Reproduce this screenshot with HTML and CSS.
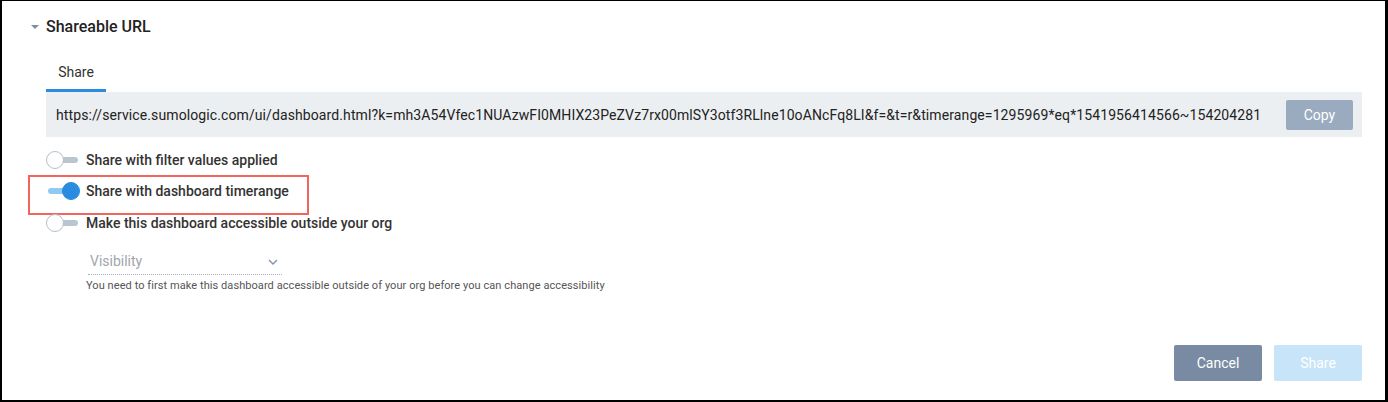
FILE: index.html
```html
<!DOCTYPE html>
<html>
<head>
<meta charset="utf-8">
<link rel="stylesheet" href="styles.css">
</head>
<body>
<div class="panel">
  <div class="section-header">
    <span class="caret"></span>
    <h2 class="title">Shareable URL</h2>
  </div>
  <div class="section-body">
    <div class="tabs"><div class="tab active">Share</div></div>
    <div class="url-bar">
      <div class="url">https://service.sumologic.com/ui/dashboard.html?k=mh3A54Vfec1NUAzwFI0MHIX23PeZVz7rx00mlSY3otf3RLlne10oANcFq8LI&amp;f=&amp;t=r&amp;timerange=1295969*eq*1541956414566~154204281</div>
      <button class="btn btn-copy">Copy</button>
    </div>
    <div class="options">
      <div class="option">
        <span class="toggle"><span class="track"></span><span class="knob"></span></span>
        <span class="label">Share with filter values applied</span>
      </div>
      <div class="option highlighted">
        <span class="toggle on"><span class="track"></span><span class="knob"></span></span>
        <span class="label">Share with dashboard timerange</span>
      </div>
      <div class="option">
        <span class="toggle"><span class="track"></span><span class="knob"></span></span>
        <span class="label">Make this dashboard accessible outside your org</span>
      </div>
    </div>
    <div class="visibility">
      <div class="select">
        <span class="select-text">Visibility</span>
        <svg class="chevron" width="10" height="6" viewBox="0 0 10 6"><path d="M1 1 L5 5 L9 1" fill="none" stroke="#7d92b0" stroke-width="1.4"/></svg>
      </div>
      <div class="hint">You need to first make this dashboard accessible outside of your org before you can change accessibility</div>
    </div>
  </div>
  <div class="footer">
    <button class="btn btn-cancel">Cancel</button>
    <button class="btn btn-share">Share</button>
  </div>
</div>
</body>
</html>
```
FILE: styles.css
```css
* { box-sizing: border-box; }
html, body { margin: 0; padding: 0; }
body {
  width: 1388px;
  height: 402px;
  background: #fff;
  font-family: Roboto, "Liberation Sans", Arial, sans-serif;
  color: #222;
  overflow: hidden;
}
.panel {
  width: 1388px;
  height: 402px;
  border-style: solid;
  border-color: #000;
  border-width: 1px 3px 2px 2px;
  display: flex;
  flex-direction: column;
}
.section-header {
  display: flex;
  align-items: center;
  height: 48px;
  padding-left: 29px;
  padding-top: 2px;
}
.caret {
  width: 0;
  height: 0;
  border-left: 4px solid transparent;
  border-right: 4px solid transparent;
  border-top: 4px solid #7f8ea5;
  margin-right: 7px;
  margin-top: 1px;
}
.title {
  margin: 0;
  font-size: 16px;
  font-weight: 500;
  color: #222;
}
.section-body {
  padding: 0 23px 0 44px;
}
.tabs {
  display: flex;
  margin-top: 13px;
}
.tab {
  width: 60px;
  height: 30px;
  font-size: 14px;
  color: #333;
  text-align: center;
  line-height: 20px;
  border-bottom: 3px solid #2a8ce0;
}
.url-bar {
  display: flex;
  align-items: center;
  justify-content: space-between;
  height: 45px;
  background: #eceff1;
  padding: 0 9px 0 10px;
}
.url {
  white-space: nowrap;
  font-size: 14px;
  letter-spacing: 0.1px;
  color: #222;
}
.btn {
  border: none;
  border-radius: 2px;
  font-family: inherit;
  font-size: 14px;
  color: #fff;
  padding: 0;
}
.btn-copy {
  width: 67px;
  height: 30px;
  background: #9aabbf;
}
.options {
  display: flex;
  flex-direction: column;
  margin-top: 7px;
}
.option {
  position: relative;
  display: flex;
  align-items: center;
  height: 31.5px;
}
.option.highlighted::after {
  content: "";
  position: absolute;
  left: -18px;
  top: -1px;
  width: 277px;
  height: 36px;
  border: 2px solid #f0665e;
}
.toggle {
  position: relative;
  width: 34px;
  height: 18px;
  margin-right: 6px;
}
.track {
  position: absolute;
  left: 2px;
  top: 6px;
  width: 30px;
  height: 6px;
  border-radius: 3px;
  background: #b9c6d1;
}
.knob {
  position: absolute;
  left: 0;
  top: 0;
  width: 18px;
  height: 18px;
  border-radius: 50%;
  background: #fff;
  border: 1px solid #b3bfcb;
}
.toggle.on .track { background: #90c9f2; }
.toggle.on .knob {
  left: 16px;
  background: #2a8ce0;
  border-color: #2a8ce0;
}
.label {
  font-size: 14px;
  font-weight: 500;
  color: #333;
}
.visibility {
  padding-left: 42px;
  margin-top: 10px;
}
.select {
  width: 194px;
  height: 26px;
  display: flex;
  align-items: center;
  justify-content: space-between;
  padding: 0 4px 0 2px;
  border-bottom: 1px dotted #a8b0bb;
}
.select-text {
  font-size: 14px;
  color: #a2a6ab;
}
.chevron { margin-top: 1px; }
.hint {
  font-size: 11px;
  letter-spacing: 0.07px;
  color: #555;
  margin-top: 4px;
  margin-left: -2px;
}
.footer {
  margin-top: auto;
  display: flex;
  justify-content: flex-end;
  gap: 12px;
  padding: 0 23px 19px 0;
}
.btn-cancel {
  width: 88px;
  height: 36px;
  background: #788ba2;
}
.btn-share {
  width: 88px;
  height: 36px;
  background: #c7e4f8;
}
```
